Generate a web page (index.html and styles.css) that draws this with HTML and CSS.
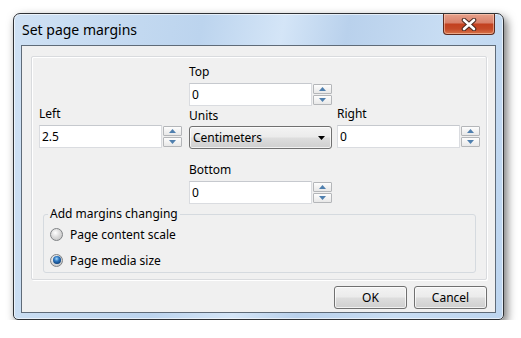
FILE: index.html
```
<!DOCTYPE html>
<html lang="en">
<head>
    <meta charset="UTF-8">
    <title>Set page margins</title>
    <link rel="stylesheet" href="styles.css">
</head>
<body>
    <div class="window">
        <div class="titlebar">
            <span class="title">Set page margins</span>
            <button class="close" title="Close">
                <svg width="16" height="13" viewBox="0 0 16 13">
                    <path d="M3 2 L13 11 M13 2 L3 11" stroke="#4a2a22" stroke-width="4.6" stroke-linecap="round"/>
                    <path d="M3 2 L13 11 M13 2 L3 11" stroke="#fff" stroke-width="2.6" stroke-linecap="round"/>
                </svg>
            </button>
        </div>

        <div class="client">
            <div class="panel">
                <div class="fields">
                    <div class="cell cell-top">
                        <label>Top</label>
                        <div class="spin">
                            <input type="text" value="0">
                            <div class="spin-buttons">
                                <span class="spin-btn up"><svg width="7" height="4" viewBox="0 0 7 4"><path d="M0 4 L3.5 0 L7 4 Z"/></svg></span>
                                <span class="spin-btn down"><svg width="7" height="4" viewBox="0 0 7 4"><path d="M0 0 L3.5 4 L7 0 Z"/></svg></span>
                            </div>
                        </div>
                    </div>

                    <div class="cell cell-left">
                        <label>Left</label>
                        <div class="spin">
                            <input type="text" value="2.5">
                            <div class="spin-buttons">
                                <span class="spin-btn up"><svg width="7" height="4" viewBox="0 0 7 4"><path d="M0 4 L3.5 0 L7 4 Z"/></svg></span>
                                <span class="spin-btn down"><svg width="7" height="4" viewBox="0 0 7 4"><path d="M0 0 L3.5 4 L7 0 Z"/></svg></span>
                            </div>
                        </div>
                    </div>

                    <div class="cell cell-units">
                        <label>Units</label>
                        <div class="combo">
                            <span>Centimeters</span>
                            <svg width="7" height="4" viewBox="0 0 7 4"><path d="M0 0 L7 0 L3.5 4 Z" fill="#000"/></svg>
                        </div>
                    </div>

                    <div class="cell cell-right">
                        <label>Right</label>
                        <div class="spin">
                            <input type="text" value="0">
                            <div class="spin-buttons">
                                <span class="spin-btn up"><svg width="7" height="4" viewBox="0 0 7 4"><path d="M0 4 L3.5 0 L7 4 Z"/></svg></span>
                                <span class="spin-btn down"><svg width="7" height="4" viewBox="0 0 7 4"><path d="M0 0 L3.5 4 L7 0 Z"/></svg></span>
                            </div>
                        </div>
                    </div>

                    <div class="cell cell-bottom">
                        <label>Bottom</label>
                        <div class="spin">
                            <input type="text" value="0">
                            <div class="spin-buttons">
                                <span class="spin-btn up"><svg width="7" height="4" viewBox="0 0 7 4"><path d="M0 4 L3.5 0 L7 4 Z"/></svg></span>
                                <span class="spin-btn down"><svg width="7" height="4" viewBox="0 0 7 4"><path d="M0 0 L3.5 4 L7 0 Z"/></svg></span>
                            </div>
                        </div>
                    </div>
                </div>

                <fieldset class="group">
                    <legend>Add margins changing</legend>
                    <div class="option"><span class="radio"></span>Page content scale</div>
                    <div class="option"><span class="radio checked"></span>Page media size</div>
                </fieldset>
            </div>

            <div class="actions">
                <button class="btn">OK</button>
                <button class="btn">Cancel</button>
            </div>
        </div>
    </div>
</body>
</html>
```

FILE: styles.css
```
body {
    margin: 0;
    background-color: #fff;
    font-family: 'Noto Sans', 'Liberation Sans', sans-serif;
    font-size: 12px;
    color: #000;
}

.window {
    margin: 13px 0 0 13px;
    width: 491px;
    height: 307px;
    box-sizing: border-box;
    padding: 0 7px 6px 7px;
    border: 1px solid #2f3236;
    border-radius: 7px 7px 5px 5px;
    background: linear-gradient(100deg, #cfe1f4 0%, #bcd4ee 35%, #d4e5f7 50%, #b9d1ec 62%, #c8ddf3 80%, #bdd5ef 100%);
    box-shadow: 3px 4px 10px rgba(0, 0, 0, 0.55), inset 0 0 0 1px rgba(255, 255, 255, 0.6);
}

.titlebar {
    height: 31px;
    display: flex;
    justify-content: space-between;
    align-items: flex-start;
}

.title {
    margin: 7px 0 0 1px;
    font-size: 14px;
    line-height: 18px;
}

.close {
    margin-right: 1px;
    width: 52px;
    height: 21px;
    padding: 0;
    border: 1px solid #5e2a1e;
    border-top: none;
    border-radius: 0 0 4px 4px;
    background: linear-gradient(#e6a08a 0%, #d8806a 45%, #c2401f 50%, #c54a28 75%, #d8744a 100%);
    box-shadow: inset 0 0 0 1px rgba(255, 220, 200, 0.5);
    display: flex;
    align-items: center;
    justify-content: center;
}

.client {
    height: 268px;
    box-sizing: border-box;
    padding: 10px 8px 3px 9px;
    border: 1px solid #5f6b78;
    background-color: #f0f0f0;
}

.panel {
    padding: 7px 0 6px 0;
    border: 1px solid #d9dbde;
    border-radius: 2px;
    box-shadow: inset 1px 1px 0 #fff, 1px 1px 0 #fff;
}

.fields {
    display: grid;
    grid-template-columns: 150px 148px 144px;
    grid-template-rows: 42px 44px auto;
    padding-left: 7px;
}

.cell label {
    display: block;
    line-height: 16px;
    margin-bottom: 3px;
}

.cell-top { grid-column: 2; grid-row: 1; }
.cell-left { grid-column: 1; grid-row: 2; }
.cell-units { grid-column: 2; grid-row: 2; margin-top: 2px; }
.cell-units label { margin-bottom: 2px; }
.cell-right { grid-column: 3; grid-row: 2; }
.cell-bottom { grid-column: 2; grid-row: 3; margin-top: 12px; }

.spin {
    display: flex;
    height: 23px;
}

.spin input {
    width: 123px;
    height: 23px;
    box-sizing: border-box;
    margin: 0;
    padding: 0 2px;
    border: 1px solid #dadce0;
    border-top-color: #c6c9ce;
    background-color: #fff;
    font-family: inherit;
    font-size: 12px;
    color: #000;
    outline: none;
}

.spin-buttons {
    margin-left: 1px;
    padding: 1px 0;
    display: flex;
    flex-direction: column;
    gap: 1px;
}

.spin-btn {
    width: 19px;
    height: 10px;
    box-sizing: border-box;
    border: 1px solid #b4b6b9;
    border-radius: 1px;
    background: linear-gradient(#fdfdfd, #e8e8e8);
    display: flex;
    align-items: center;
    justify-content: center;
}

.spin-btn svg {
    fill: #4f7fae;
}

.combo {
    width: 143px;
    height: 23px;
    box-sizing: border-box;
    padding: 0 6px 0 3px;
    border: 1px solid #707070;
    border-radius: 3px;
    background: linear-gradient(#f3f3f3 0%, #ebebeb 48%, #dddddd 52%, #cfcfcf 100%);
    box-shadow: inset 0 0 0 1px rgba(255, 255, 255, 0.7);
    display: flex;
    align-items: center;
    justify-content: space-between;
}

.group {
    margin: 2px 10px 0 11px;
    padding: 0 4px;
    min-width: 0;
    border: 1px solid #d5dadf;
    border-radius: 3px;
    display: flex;
    flex-direction: column;
    gap: 2px;
}

.group legend {
    padding: 0 2px 0 2px;
    line-height: 16px;
}

.option {
    height: 24px;
    display: flex;
    align-items: center;
}

.radio {
    width: 13px;
    height: 13px;
    box-sizing: border-box;
    margin: 0 7px 0 2px;
    border: 1px solid #7f8285;
    border-radius: 50%;
    background: radial-gradient(circle at 40% 35%, #ffffff 0%, #dcdcdc 45%, #bdbdbd 100%);
    display: flex;
    align-items: center;
    justify-content: center;
}

.radio.checked::after {
    content: '';
    width: 8px;
    height: 8px;
    border-radius: 50%;
    background: radial-gradient(circle at 45% 35%, #a8dcff 0%, #2f78c0 35%, #0e427e 75%, #082c58 100%);
}

.actions {
    margin-top: 6px;
    display: flex;
    justify-content: flex-end;
    gap: 7px;
}

.btn {
    width: 73px;
    height: 23px;
    padding: 0;
    border: 1px solid #707070;
    border-radius: 3px;
    background: linear-gradient(#f3f3f3 0%, #ebebeb 48%, #dddddd 52%, #cfcfcf 100%);
    box-shadow: inset 0 0 0 1px rgba(255, 255, 255, 0.7);
    font-family: inherit;
    font-size: 12px;
    color: #000;
}
```
